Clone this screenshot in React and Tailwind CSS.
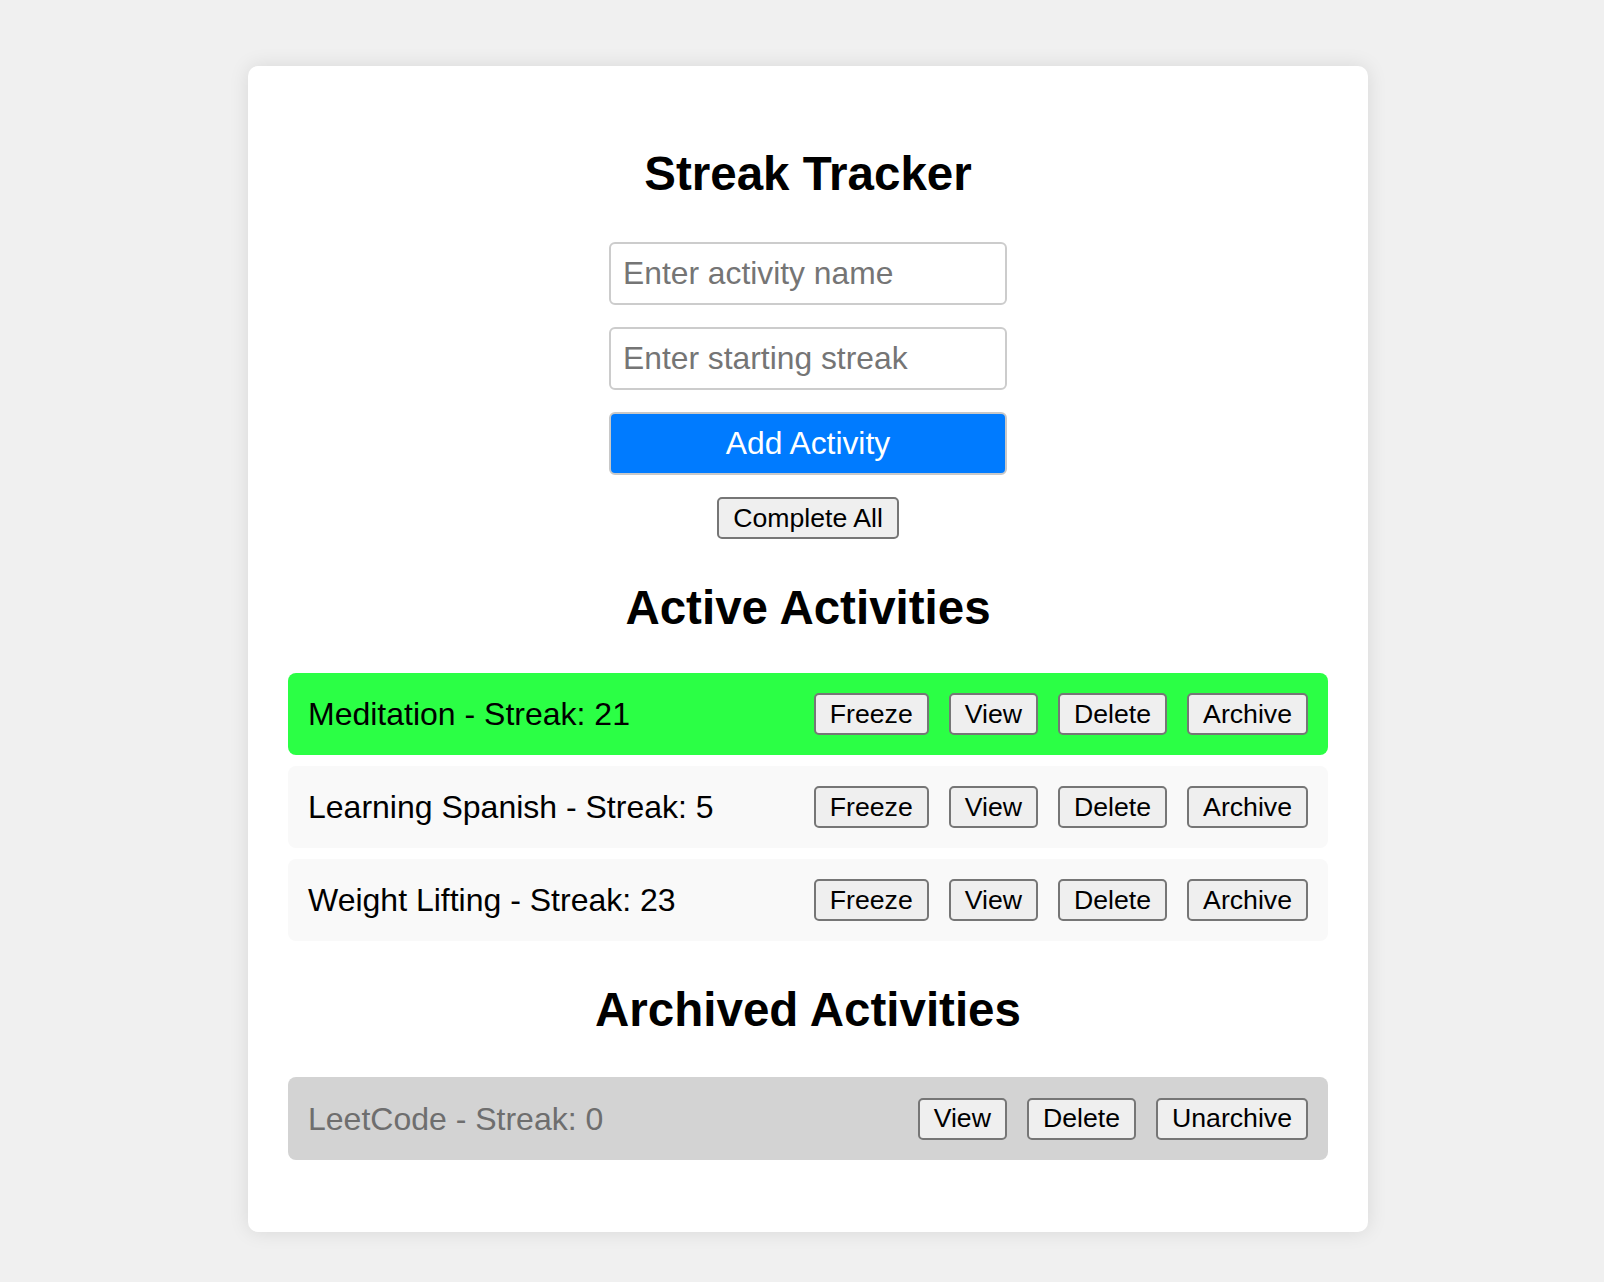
import { useState } from 'react'

const initialActive = [
  { id: 1, name: 'Meditation', streak: 21, done: true },
  { id: 2, name: 'Learning Spanish', streak: 5, done: false },
  { id: 3, name: 'Weight Lifting', streak: 23, done: false },
]

const initialArchived = [{ id: 4, name: 'LeetCode', streak: 0 }]

function RowButton({ children, onClick }) {
  return (
    <button
      onClick={onClick}
      className="h-[42px] px-[14px] border-2 border-[#767676] rounded-[5px] bg-[#efefef] text-[26.67px] leading-none text-black"
    >
      {children}
    </button>
  )
}

function App() {
  const [active, setActive] = useState(initialActive)
  const [archived, setArchived] = useState(initialArchived)
  const [name, setName] = useState('')
  const [streak, setStreak] = useState('')

  const addActivity = () => {
    if (!name.trim()) return
    setActive([...active, { id: Date.now(), name, streak: Number(streak) || 0, done: false }])
    setName('')
    setStreak('')
  }

  const archive = (item) => {
    setActive(active.filter(a => a.id !== item.id))
    setArchived([...archived, item])
  }

  const unarchive = (item) => {
    setArchived(archived.filter(a => a.id !== item.id))
    setActive([...active, { ...item, done: false }])
  }

  return (
    <div className="min-h-screen bg-[#f0f0f0] pt-[66px] pb-[50px] pl-[12px] flex justify-center font-['Liberation_Sans',Arial,sans-serif] text-black">
      <div className="w-[1120px] bg-white rounded-[10px] shadow-[0_0_20px_rgba(0,0,0,0.1)] px-[40px] pt-[80px] pb-[72px] flex flex-col">
        <h1 className="text-center text-[47.5px] leading-[55px] font-bold">Streak Tracker</h1>

        {/* Form */}
        <div className="flex flex-col items-center mt-[41px] gap-[22px]">
          <input
            value={name}
            onChange={e => setName(e.target.value)}
            placeholder="Enter activity name"
            className="w-[398px] h-[63px] border-2 border-[#cccccc] rounded-[6px] px-[12px] text-[31.8px] placeholder:text-[#757575] outline-none"
          />
          <input
            value={streak}
            onChange={e => setStreak(e.target.value)}
            placeholder="Enter starting streak"
            className="w-[398px] h-[63px] border-2 border-[#cccccc] rounded-[6px] px-[12px] text-[31.8px] placeholder:text-[#757575] outline-none"
          />
          <button
            onClick={addActivity}
            className="w-[398px] h-[63px] border-2 border-[#c8c8c8] rounded-[6px] bg-[#007bff] text-white text-[31.8px]"
          >
            Add Activity
          </button>
          <button
            onClick={() => setActive(active.map(a => ({ ...a, done: true })))}
            className="h-[42px] px-[14px] border-2 border-[#767676] rounded-[5px] bg-[#efefef] text-[26.67px] leading-none"
          >
            Complete All
          </button>
        </div>

        {/* Active */}
        <h2 className="text-center text-[47.5px] leading-[55px] font-bold mt-[41px]">Active Activities</h2>
        <div className="flex flex-col gap-[11px] mt-[38px]">
          {active.map(item => (
            <div
              key={item.id}
              className={`h-[82px] rounded-[8px] px-[20px] flex items-center justify-between ${
                item.done ? 'bg-[#2bff45]' : 'bg-[#f9f9f9]'
              }`}
            >
              <span className="text-[32px]">{item.name} - Streak: {item.streak}</span>
              <div className="flex items-center gap-[20px]">
                <RowButton>Freeze</RowButton>
                <RowButton>View</RowButton>
                <RowButton onClick={() => setActive(active.filter(a => a.id !== item.id))}>Delete</RowButton>
                <RowButton onClick={() => archive(item)}>Archive</RowButton>
              </div>
            </div>
          ))}
        </div>

        {/* Archived */}
        <h2 className="text-center text-[47.5px] leading-[55px] font-bold mt-[41px]">Archived Activities</h2>
        <div className="flex flex-col gap-[11px] mt-[40px]">
          {archived.map(item => (
            <div key={item.id} className="h-[83px] rounded-[8px] px-[20px] flex items-center justify-between bg-[#d3d3d3]">
              <span className="text-[32px] text-[#6e6e6e]">{item.name} - Streak: {item.streak}</span>
              <div className="flex items-center gap-[20px]">
                <RowButton>View</RowButton>
                <RowButton onClick={() => setArchived(archived.filter(a => a.id !== item.id))}>Delete</RowButton>
                <RowButton onClick={() => unarchive(item)}>Unarchive</RowButton>
              </div>
            </div>
          ))}
        </div>
      </div>
    </div>
  )
}

export default App
